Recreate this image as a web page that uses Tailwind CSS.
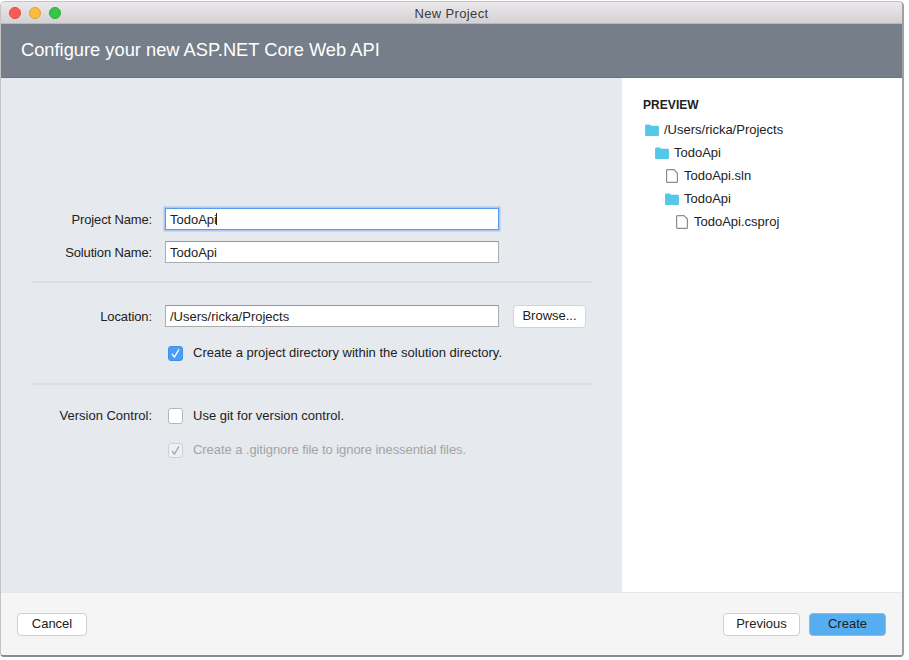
<!DOCTYPE html>
<html lang="en">
  <head>
    <meta charset="utf-8">
    <title>New Project</title>
    <script src="https://cdn.jsdelivr.net/npm/@tailwindcss/browser@4"></script>
  </head>
  <body class="bg-white">
    <div class="w-[909px] h-[660px] pt-[1px] bg-white font-['Liberation_Sans',sans-serif] text-[13px] text-[#222]">
      <div class="w-[904px] h-[656px] flex flex-col rounded-t-[5px] rounded-b-[4px] overflow-hidden border border-[#c4c4c4] border-b-2 border-b-[#8a8a8a] border-r-2 border-r-[#a0a0a0]">

        <!-- title bar -->
        <div class="h-[22px] shrink-0 flex items-center px-[8px] bg-gradient-to-b from-[#ebe9eb] to-[#d3d1d3] border-b border-[#b9b9b9]">
          <div class="flex gap-[8px] w-[60px]">
            <span class="w-[12px] h-[12px] rounded-full bg-[#fc5b57] border border-[#e3473f]"></span>
            <span class="w-[12px] h-[12px] rounded-full bg-[#fdbc40] border border-[#dea234]"></span>
            <span class="w-[12px] h-[12px] rounded-full bg-[#34c84a] border border-[#2aac38]"></span>
          </div>
          <div class="flex-1 text-center text-[#3c3c3c] tracking-[0.35px] pr-[60px] pt-[2px]">New Project</div>
        </div>

        <!-- header -->
        <div class="h-[54px] shrink-0 flex items-center pl-[20px] bg-[#767f89] border-b border-[#6a727b] text-white text-[18.3px] pb-[2px]">Configure your new ASP.NET Core Web API</div>

        <!-- body -->
        <div class="flex-1 flex min-h-0">
          <div class="w-[621px] shrink-0 bg-[#e6e9ee] pt-[130px] pl-[30px] pr-[30px]">
            <div class="flex items-center h-[22px]">
              <label class="w-[121px] text-right pt-[1px] tracking-[-0.15px]">Project Name:</label>
              <div class="relative ml-[13px]">
                <input class="block w-[334px] h-[22px] px-[4px] bg-white border border-[#5d9cec] shadow-[0_0_0_1.5px_#a9c8f3] outline-none text-[13px] text-[#222]" value="TodoApi">
                <span class="absolute left-[51px] top-[5px] w-[1px] h-[12px] bg-[#222]"></span>
              </div>
            </div>
            <div class="flex items-center h-[22px] mt-[11px]">
              <label class="w-[121px] text-right pt-[1px] tracking-[-0.15px]">Solution Name:</label>
              <input class="ml-[13px] w-[334px] h-[22px] px-[4px] bg-white border border-[#adadad] border-t-[#989898] outline-none text-[13px] text-[#222]" value="TodoApi">
            </div>

            <div class="h-[2px] bg-[#dcdee2] mt-[18px]"></div>

            <div class="flex items-center h-[22px] mt-[22px]">
              <label class="w-[121px] text-right pt-[1px] tracking-[-0.1px]">Location:</label>
              <input class="ml-[13px] w-[334px] h-[22px] px-[4px] bg-white border border-[#adadad] border-t-[#989898] outline-none text-[13px] text-[#222]" value="/Users/ricka/Projects">
              <button class="ml-[14px] w-[73px] h-[23px] bg-white rounded-[4px] border border-[#d4d4d4] text-[13px] text-[#222]">Browse...</button>
            </div>
            <div class="flex items-center gap-[10px] ml-[137px] mt-[15px] h-[22px]">
              <span class="w-[15px] h-[15px] rounded-[3px] bg-[#4a9cf6] border border-[#3f8fe6] flex items-center justify-center">
                <svg width="11" height="11" viewBox="0 0 11 11" fill="none" stroke="#fff" stroke-width="1.3"><path d="M2 5.8 L4.4 9 L9 1.4"/></svg>
              </span>
              <span>Create a project directory within the solution directory.</span>
            </div>

            <div class="h-[2px] bg-[#dcdee2] mt-[19px]"></div>

            <div class="flex items-center h-[22px] mt-[20px]">
              <label class="w-[121px] text-right">Version Control:</label>
              <span class="ml-[16px] w-[15px] h-[16px] mb-[1px] rounded-[3px] bg-white border border-[#b5b5b5]"></span>
              <span class="ml-[10px]">Use git for version control.</span>
            </div>
            <div class="flex items-center gap-[10px] ml-[137px] mt-[12px] h-[22px] text-[#a2a4a8]">
              <span class="w-[15px] h-[15px] rounded-[3px] bg-[#eff0f3] border border-[#d0d1d4] flex items-center justify-center">
                <svg width="11" height="11" viewBox="0 0 11 11" fill="none" stroke="#a6a7aa" stroke-width="1.3"><path d="M2 5.8 L4.4 9 L9 1.4"/></svg>
              </span>
              <span class="tracking-[-0.07px]">Create a .gitignore file to ignore inessential files.</span>
            </div>
          </div>

          <!-- preview -->
          <div class="flex-1 bg-white pt-[20px] pl-[21px]">
            <div class="font-bold text-[12px] leading-[14px] tracking-[0.05px] text-[#222] mb-[6px]">PREVIEW</div>
            <div class="flex flex-col">
              <div class="flex items-center h-[23px] pl-[2px] gap-[5px]">
                <svg width="14" height="12" viewBox="0 0 15 13"><path fill="#55c8e8" d="M0 1.5 Q0 .5 1 .5 H5 L6.5 2 H14 Q15 2 15 3 V12 Q15 13 14 13 H1 Q0 13 0 12 Z"/></svg>
                <span>/Users/ricka/Projects</span>
              </div>
              <div class="flex items-center h-[23px] pl-[12px] gap-[5px]">
                <svg width="14" height="12" viewBox="0 0 15 13"><path fill="#55c8e8" d="M0 1.5 Q0 .5 1 .5 H5 L6.5 2 H14 Q15 2 15 3 V12 Q15 13 14 13 H1 Q0 13 0 12 Z"/></svg>
                <span>TodoApi</span>
              </div>
              <div class="flex items-center h-[23px] pl-[23px] gap-[6px]">
                <svg width="12" height="14" viewBox="0 0 12 14" fill="none" stroke="#8d8d8d" stroke-width="1.2"><path d="M1.6 .6 H8 L11.4 4 V12.4 Q11.4 13.4 10.4 13.4 H1.6 Q.6 13.4 .6 12.4 V1.6 Q.6 .6 1.6 .6 Z"/></svg>
                <span>TodoApi.sln</span>
              </div>
              <div class="flex items-center h-[23px] pl-[22px] gap-[5px]">
                <svg width="14" height="12" viewBox="0 0 15 13"><path fill="#55c8e8" d="M0 1.5 Q0 .5 1 .5 H5 L6.5 2 H14 Q15 2 15 3 V12 Q15 13 14 13 H1 Q0 13 0 12 Z"/></svg>
                <span>TodoApi</span>
              </div>
              <div class="flex items-center h-[23px] pl-[33px] gap-[6px]">
                <svg width="12" height="14" viewBox="0 0 12 14" fill="none" stroke="#8d8d8d" stroke-width="1.2"><path d="M1.6 .6 H8 L11.4 4 V12.4 Q11.4 13.4 10.4 13.4 H1.6 Q.6 13.4 .6 12.4 V1.6 Q.6 .6 1.6 .6 Z"/></svg>
                <span>TodoApi.csproj</span>
              </div>
            </div>
          </div>
        </div>

        <!-- footer -->
        <div class="h-[63px] shrink-0 flex items-center px-[16px] bg-[#f5f5f5] border-t border-[#e6e6e6]">
          <button class="w-[70px] h-[23px] bg-white rounded-[4px] border border-[#d0d0d0] text-[13px] text-[#222]">Cancel</button>
          <div class="flex-1"></div>
          <button class="w-[77px] h-[23px] bg-white rounded-[4px] border border-[#d0d0d0] text-[13px] text-[#222]">Previous</button>
          <button class="ml-[9px] w-[77px] h-[23px] bg-[#56adf0] rounded-[4px] border border-[#a8b4bf] text-[13px] text-[#222]">Create</button>
        </div>
      </div>
    </div>
  </body>
</html>
